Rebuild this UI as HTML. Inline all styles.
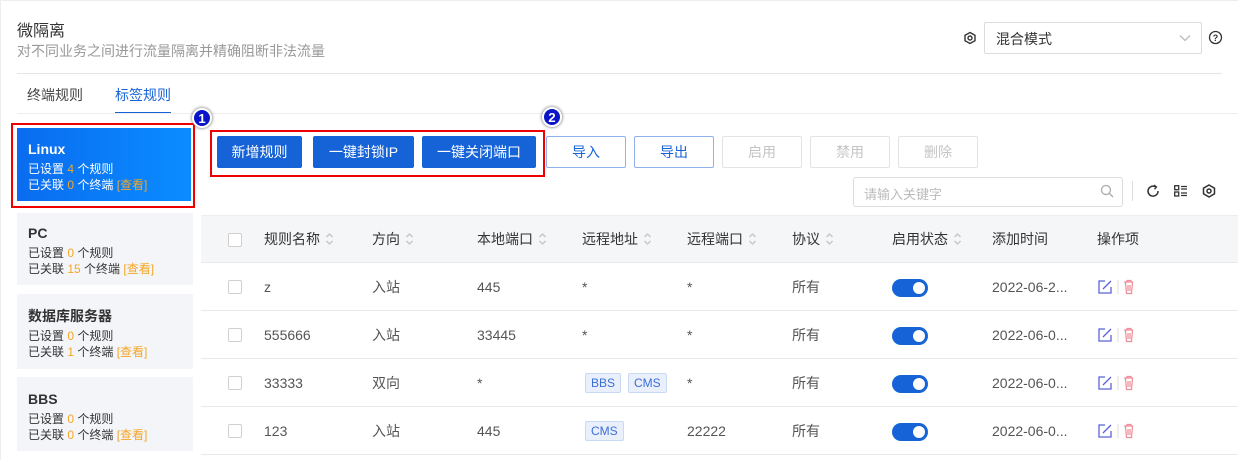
<!DOCTYPE html><html><head><meta charset="utf-8"><style>
*{box-sizing:border-box;margin:0;padding:0}
body{width:1238px;height:460px;overflow:hidden;background:#fff;font-family:"Liberation Sans","Noto Sans CJK SC",sans-serif;color:#333;font-size:14px;position:relative}
.a{position:absolute;white-space:nowrap}
.btn{position:absolute;top:136px;height:32px;display:flex;align-items:center;justify-content:center;font-size:14px;border-radius:2px}
.pri{background:#1663d8;color:#fff}
.out{border:1px solid #8fb1ec;color:#1663d8;background:#fff}
.dis{border:1px solid #e3e3e3;color:#c4c4c4;background:#fff}
.card{position:absolute;left:17px;width:176px;background:#f4f5f8;padding:10px 11px;font-size:12px;line-height:16px;color:#333}
.card b{font-size:14px;display:block;margin-bottom:2px;line-height:20px}
.o{color:#f5a623}
.row{position:absolute;left:201px;width:1037px;height:48px;border-bottom:1px solid #e8e8ee}
.c{position:absolute;top:50%;transform:translateY(-50%);white-space:nowrap;font-size:14px;color:#555}
.cb{position:absolute;left:27px;top:17px;width:14px;height:14px;border:1px solid #d0d0d0;border-radius:2px;background:#fff}
.sw{position:absolute;left:691px;top:16px;width:36px;height:18px;border-radius:9px;background:#1663d8}
.sw:after{content:"";position:absolute;right:3px;top:3px;width:12px;height:12px;border-radius:50%;background:#fff}
.tag{display:inline-block;border:1px solid #c9daf6;background:#e9f0fc;color:#3b6fd6;font-size:12px;padding:0 5px;line-height:18px;border-radius:2px;margin-right:7px}
.srt{display:inline-block;width:9px;height:14px;margin-left:5px;vertical-align:-2px}
.badge{position:absolute;width:20px;height:20px;border-radius:50%;background:#0a14c8;color:#fff;font-weight:bold;font-size:13px;text-align:center;line-height:17px;border:2px solid #fff;box-shadow:0 0 3px #555}
</style></head><body>
<svg width="0" height="0" style="position:absolute"><defs><symbol id="s" viewBox="0 0 9 14"><path d="M1.5 5L4.5 2L7.5 5M1.5 9L4.5 12L7.5 9" fill="none" stroke="#c8c8c8" stroke-width="1.5"/></symbol></defs></svg>
<div class="a" style="left:0;top:0;width:1238px;height:460px;border-left:1px solid #eee;border-top:1px solid #eee"></div>
<div class="a" style="left:17px;top:17px;font-size:16px;color:#333">微隔离</div>
<div class="a" style="left:17px;top:41px;font-size:14px;color:#999">对不同业务之间进行流量隔离并精确阻断非法流量</div>
<svg class="a" style="left:963px;top:31px" width="14" height="14" viewBox="0 0 14 14"><path d="M7 1.5L12 4.3V9.7L7 12.5L2 9.7V4.3Z" fill="none" stroke="#333" stroke-width="1.4"/><circle cx="7" cy="7" r="2" fill="none" stroke="#333" stroke-width="1.4"/></svg>
<div class="a" style="left:984px;top:22px;width:218px;height:32px;border:1px solid #dcdcdc;border-radius:2px;padding:6px 11px;font-size:14px;color:#333">混合模式<svg style="position:absolute;right:10px;top:11px" width="12" height="8" viewBox="0 0 12 8"><path d="M1 1.5L6 6.5L11 1.5" fill="none" stroke="#bbb" stroke-width="1.3"/></svg></div>
<svg class="a" style="left:1208px;top:30px" width="15" height="15" viewBox="0 0 15 15"><circle cx="7.5" cy="7.5" r="6" fill="none" stroke="#333" stroke-width="1.3"/><text x="7.5" y="11" font-size="9" text-anchor="middle" font-family="Liberation Sans" font-weight="bold" fill="#333">?</text></svg>
<div class="a" style="left:17px;top:73px;width:1205px;height:1px;background:#e5e5e5"></div>
<div class="a" style="left:27px;top:85px;font-size:14px;color:#444">终端规则</div>
<div class="a" style="left:115px;top:85px;font-size:14px;color:#1663d8">标签规则</div>
<div class="a" style="left:115px;top:112px;width:56px;height:2px;background:#1663d8"></div>
<div class="a" style="left:17px;top:113px;width:1221px;height:1px;background:#eee"></div>

<div class="a" style="left:11px;top:123px;width:184px;height:85px;border:2px solid #e00"></div>
<div class="card" style="top:128px;height:73px;width:174px;background:linear-gradient(90deg,#0a6cf0,#0a8cff);color:#fff;padding-top:11px"><b>Linux</b>已设置 <span class="o">4</span> 个规则<br>已关联 <span class="o">0</span> 个终端 <span class="o">[查看]</span></div>
<div class="card" style="top:213px;height:72px"><b>PC</b>已设置 <span class="o">0</span> 个规则<br>已关联 <span class="o">15</span> 个终端 <span class="o">[查看]</span></div>
<div class="card" style="top:294px;height:75px;padding-top:12px"><b>数据库服务器</b>已设置 <span class="o">0</span> 个规则<br>已关联 <span class="o">1</span> 个终端 <span class="o">[查看]</span></div>
<div class="card" style="top:377px;height:74px;padding-top:12px"><b>BBS</b>已设置 <span class="o">0</span> 个规则<br>已关联 <span class="o">0</span> 个终端 <span class="o">[查看]</span></div>
<div class="badge" style="left:192px;top:108px">1</div>

<div class="a" style="left:210px;top:130px;width:335px;height:47px;border:2px solid #e00"></div>
<div class="badge" style="left:542px;top:107px">2</div>
<div class="btn pri" style="left:217px;width:85px">新增规则</div>
<div class="btn pri" style="left:313px;width:101px">一键封锁IP</div>
<div class="btn pri" style="left:422px;width:114px">一键关闭端口</div>
<div class="btn out" style="left:546px;width:80px">导入</div>
<div class="btn out" style="left:634px;width:80px">导出</div>
<div class="btn dis" style="left:722px;width:80px">启用</div>
<div class="btn dis" style="left:810px;width:80px">禁用</div>
<div class="btn dis" style="left:898px;width:80px">删除</div>

<div class="a" style="left:853px;top:177px;width:270px;height:30px;border:1px solid #dcdcdc;border-radius:3px;padding:6px 10px;font-size:13px;color:#bbb">请输入关键字</div>
<svg class="a" style="left:1100px;top:184px" width="14" height="14" viewBox="0 0 14 14"><circle cx="6" cy="6" r="4.5" fill="none" stroke="#aaa" stroke-width="1.3"/><path d="M9.5 9.5L13 13" stroke="#aaa" stroke-width="1.3"/></svg>
<div class="a" style="left:1132px;top:181px;width:1px;height:20px;background:#ddd"></div>
<svg class="a" style="left:1146px;top:184px" width="14" height="14" viewBox="0 0 14 14"><path d="M9.5 2.8A5 5 0 1 0 12 7" fill="none" stroke="#333" stroke-width="1.5"/><path d="M8 1l2.5 2-2 2.3" fill="none" stroke="#333" stroke-width="1.3"/></svg>
<svg class="a" style="left:1174px;top:185px" width="13" height="12" viewBox="0 0 13 12"><rect x="0.7" y="0.7" width="4" height="4" fill="none" stroke="#333" stroke-width="1.3"/><rect x="0.7" y="7" width="4" height="4" fill="none" stroke="#333" stroke-width="1.3"/><path d="M7 1.5h6M7 4h6M7 8h6M7 10.5h6" stroke="#333" stroke-width="1.3"/></svg>
<svg class="a" style="left:1202px;top:184px" width="14" height="14" viewBox="0 0 14 14"><path d="M7 1L12.5 4.2V9.8L7 13L1.5 9.8V4.2Z" fill="none" stroke="#333" stroke-width="1.5"/><circle cx="7" cy="7" r="2" fill="none" stroke="#333" stroke-width="1.5"/></svg>

<div class="row" style="top:215px;background:#f5f6f8;border-top:1px solid #eceef2">
<div class="cb"></div>
<div class="c" style="left:63px;color:#333">规则名称<svg class="srt"><use href="#s"/></svg></div>
<div class="c" style="left:171px;color:#333">方向<svg class="srt"><use href="#s"/></svg></div>
<div class="c" style="left:276px;color:#333">本地端口<svg class="srt"><use href="#s"/></svg></div>
<div class="c" style="left:381px;color:#333">远程地址<svg class="srt"><use href="#s"/></svg></div>
<div class="c" style="left:486px;color:#333">远程端口<svg class="srt"><use href="#s"/></svg></div>
<div class="c" style="left:591px;color:#333">协议<svg class="srt"><use href="#s"/></svg></div>
<div class="c" style="left:691px;color:#333">启用状态<svg class="srt"><use href="#s"/></svg></div>
<div class="c" style="left:791px;color:#333">添加时间</div>
<div class="c" style="left:896px;color:#333">操作项</div>
</div>

<div class="row" style="top:263px"><div class="cb"></div><div class="c" style="left:63px">z</div><div class="c" style="left:171px">入站</div><div class="c" style="left:276px">445</div><div class="c" style="left:381px">*</div><div class="c" style="left:486px">*</div><div class="c" style="left:591px">所有</div><div class="sw"></div><div class="c" style="left:791px">2022-06-2...</div>
<svg class="c" style="left:896px" width="36" height="16" viewBox="0 0 36 16"><path d="M8 2H2V14H14V8" fill="none" stroke="#5a63d8" stroke-width="1.3"/><path d="M6 10L14 2" stroke="#5a63d8" stroke-width="1.3"/><path d="M21 1v14" stroke="#ddd"/><path d="M27 3h10M30 3V1.5h4V3M28.5 3.5l1 11h5l1-11M31 6v6M33 6v6" fill="none" stroke="#f08a96" stroke-width="1.2"/></svg></div>
<div class="row" style="top:311px"><div class="cb"></div><div class="c" style="left:63px">555666</div><div class="c" style="left:171px">入站</div><div class="c" style="left:276px">33445</div><div class="c" style="left:381px">*</div><div class="c" style="left:486px">*</div><div class="c" style="left:591px">所有</div><div class="sw"></div><div class="c" style="left:791px">2022-06-0...</div>
<svg class="c" style="left:896px" width="36" height="16" viewBox="0 0 36 16"><path d="M8 2H2V14H14V8" fill="none" stroke="#5a63d8" stroke-width="1.3"/><path d="M6 10L14 2" stroke="#5a63d8" stroke-width="1.3"/><path d="M21 1v14" stroke="#ddd"/><path d="M27 3h10M30 3V1.5h4V3M28.5 3.5l1 11h5l1-11M31 6v6M33 6v6" fill="none" stroke="#f08a96" stroke-width="1.2"/></svg></div>
<div class="row" style="top:359px"><div class="cb"></div><div class="c" style="left:63px">33333</div><div class="c" style="left:171px">双向</div><div class="c" style="left:276px">*</div><div class="c" style="left:384px"><span class="tag">BBS</span><span class="tag">CMS</span></div><div class="c" style="left:486px">*</div><div class="c" style="left:591px">所有</div><div class="sw"></div><div class="c" style="left:791px">2022-06-0...</div>
<svg class="c" style="left:896px" width="36" height="16" viewBox="0 0 36 16"><path d="M8 2H2V14H14V8" fill="none" stroke="#5a63d8" stroke-width="1.3"/><path d="M6 10L14 2" stroke="#5a63d8" stroke-width="1.3"/><path d="M21 1v14" stroke="#ddd"/><path d="M27 3h10M30 3V1.5h4V3M28.5 3.5l1 11h5l1-11M31 6v6M33 6v6" fill="none" stroke="#f08a96" stroke-width="1.2"/></svg></div>
<div class="row" style="top:407px"><div class="cb"></div><div class="c" style="left:63px">123</div><div class="c" style="left:171px">入站</div><div class="c" style="left:276px">445</div><div class="c" style="left:384px"><span class="tag">CMS</span></div><div class="c" style="left:486px">22222</div><div class="c" style="left:591px">所有</div><div class="sw"></div><div class="c" style="left:791px">2022-06-0...</div>
<svg class="c" style="left:896px" width="36" height="16" viewBox="0 0 36 16"><path d="M8 2H2V14H14V8" fill="none" stroke="#5a63d8" stroke-width="1.3"/><path d="M6 10L14 2" stroke="#5a63d8" stroke-width="1.3"/><path d="M21 1v14" stroke="#ddd"/><path d="M27 3h10M30 3V1.5h4V3M28.5 3.5l1 11h5l1-11M31 6v6M33 6v6" fill="none" stroke="#f08a96" stroke-width="1.2"/></svg></div>
</body></html>
